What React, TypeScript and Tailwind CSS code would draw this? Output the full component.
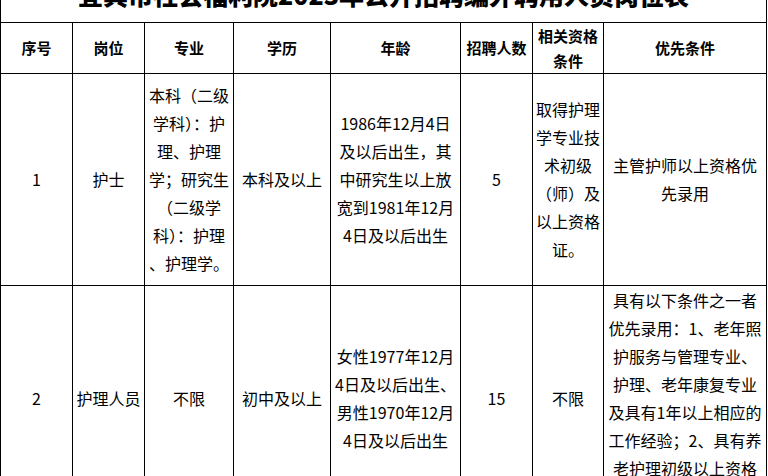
import React from 'react';

type Row = {
  no: string;
  post: string;
  major: string[];
  edu: string;
  age: string[];
  count: string;
  cert: string[];
  prior: string[];
  height: string;
  priorTop?: boolean;
};

const cols = ['w-[72px]', 'w-[72px]', 'w-[89px]', 'w-[97px]', 'w-[130px]', 'w-[72px]', 'w-[71px]', 'w-[163px]'];

const rows: Row[] = [
  {
    no: '1',
    post: '护士',
    major: ['本科（二级', '学科）：护', '理、护理', '学；研究生', '（二级学', '科）：护理', '、护理学。'],
    edu: '本科及以上',
    age: ['1986年12月4日', '及以后出生，其', '中研究生以上放', '宽到1981年12月', '4日及以后出生'],
    count: '5',
    cert: ['取得护理', '学专业技', '术初级', '（师）及', '以上资格', '证。'],
    prior: ['主管护师以上资格优', '先录用'],
    height: 'h-[212px]',
  },
  {
    no: '2',
    post: '护理人员',
    major: ['不限'],
    edu: '初中及以上',
    age: ['女性1977年12月', '4日及以后出生、', '男性1970年12月', '4日及以后出生'],
    count: '15',
    cert: ['不限'],
    prior: [
      '具有以下条件之一者',
      '优先录用：1、老年照',
      '护服务与管理专业、',
      '护理、老年康复专业',
      '及具有1年以上相应的',
      '工作经验；2、具有养',
      '老护理初级以上资格',
      '证书。',
    ],
    height: 'h-[224px]',
    priorTop: true,
  },
];

const Lines = ({ lines }: { lines: string[] }) => (
  <>
    {lines.map((l, i) => (
      <div key={i} className="whitespace-nowrap">{l}</div>
    ))}
  </>
);

const td = 'border border-black text-center align-middle px-0 py-0';

const App: React.FC = () => {
  return (
    <div className="w-[768px] h-[476px] overflow-hidden bg-white text-black font-['Noto_Sans_CJK_SC','Noto_Sans',sans-serif]">
      <table className="table-fixed border-collapse w-[766px]">
        <colgroup>
          {cols.map((c, i) => (
            <col key={i} className={c} />
          ))}
        </colgroup>
        <tbody>
          <tr className="h-[22px]">
            <td colSpan={8} className="border-x border-b border-black p-0">
              <div className="h-[21px] overflow-hidden">
                <div className="-mt-[18px] text-center text-[25px] leading-[25px] font-black whitespace-nowrap">
                  宜宾市社会福利院2023年公开招聘编外聘用人员岗位表
                </div>
              </div>
            </td>
          </tr>
          <tr className="h-[50px] text-[15px] leading-[25px] font-bold">
            <td className={td}>序号</td>
            <td className={td}>岗位</td>
            <td className={td}>专业</td>
            <td className={td}>学历</td>
            <td className={td}>年龄</td>
            <td className={td}>招聘人数</td>
            <td className={td}>
              <div>相关资格</div>
              <div>条件</div>
            </td>
            <td className={td}>优先条件</td>
          </tr>
          {rows.map((r) => (
            <tr key={r.no} className={`${r.height} text-[16px] leading-[28px]`}>
              <td className={td}>{r.no}</td>
              <td className={td}>{r.post}</td>
              <td className={td}>
                <Lines lines={r.major} />
              </td>
              <td className={td}>{r.edu}</td>
              <td className={td}>
                <Lines lines={r.age} />
              </td>
              <td className={td}>{r.count}</td>
              <td className={td}>
                <Lines lines={r.cert} />
              </td>
              <td className={r.priorTop ? 'border border-black text-center align-top p-0' : td}>
                <Lines lines={r.prior} />
              </td>
            </tr>
          ))}
        </tbody>
      </table>
    </div>
  );
};

export default App;
